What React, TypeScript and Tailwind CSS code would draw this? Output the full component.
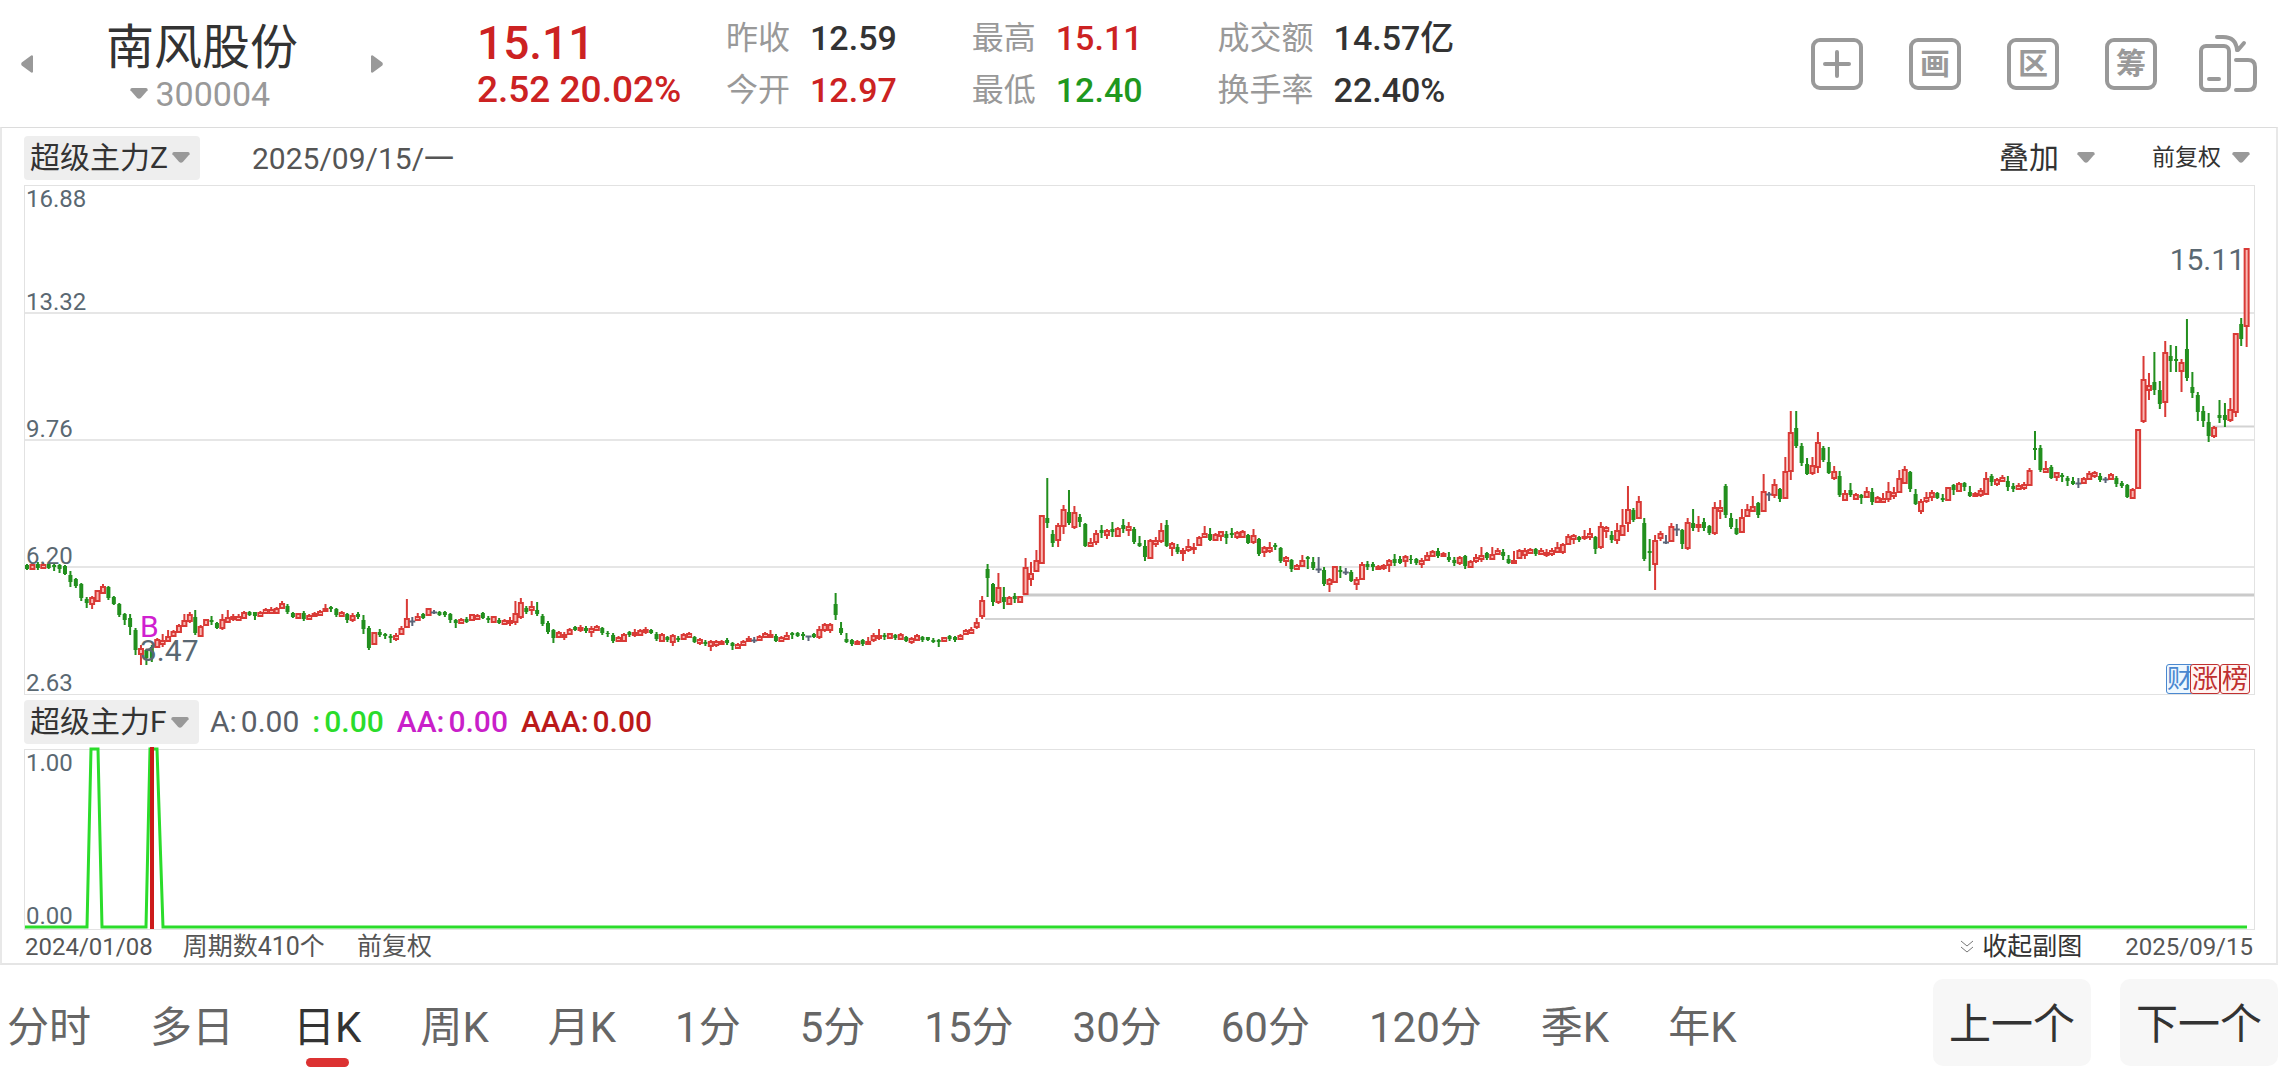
import { useState } from "react"
import clsx from "clsx"

// kind + high,bodyTop,bodyBottom,low in chart units (0 = top of the plot, 508 = bottom)
// r = up day, g = down day, k = flat day
const CANDLES = `
g378,379,383,384 r377,378,383,384 g376,378,382,384 r377,378,382,382 g377,378,382,383 g378,379,381,385 g378,379,383,387 g379,380,388,389
g385,389,396,401 g392,393,400,402 g397,398,412,415 g411,413,417,422 r410,411,418,423 r404,404,415,415 r398,400,407,407 g400,401,412,414
g410,411,418,419 g417,418,429,431 g427,428,434,439 g428,432,441,449 g442,444,464,469 r459,462,468,479 g463,464,472,479 g459,461,472,476
r452,453,461,462 r448,454,458,461 r444,450,455,456 r444,445,450,451 r438,439,446,447 r428,434,440,441 r426,428,435,437 g424,431,447,449
r439,440,450,451 r433,433,439,440 g430,434,436,439 g436,437,442,443 r428,433,442,444 r424,431,436,437 r428,430,433,435 r428,430,434,435
r425,426,432,433 g425,426,429,430 g426,426,430,434 r425,426,430,431 r422,423,427,428 r421,423,427,428 r421,422,427,428 r415,417,422,423
g418,420,426,428 g426,427,431,432 r427,427,432,433 g425,427,433,435 r428,429,433,433 r426,427,430,431 r424,425,429,430 r418,422,425,426
g420,421,423,426 g422,423,429,431 r425,426,430,431 g427,428,434,437 r427,429,434,436 g426,428,431,433 g429,434,443,448 g440,442,462,464
r446,446,458,459 g443,446,449,451 g447,448,450,453 g448,450,452,457 r447,449,453,455 r440,442,448,449 r413,432,441,442 k431,435,436,440
r427,430,434,435 g427,428,432,433 r422,422,429,429 k424,426,427,428 g425,426,429,430 g425,426,429,431 g427,428,434,437 g433,434,437,442
r432,433,437,438 g431,433,436,437 r428,428,434,434 r428,429,433,433 g426,427,432,433 g430,432,434,437 r430,430,436,437 g432,434,437,438
r433,434,438,438 r431,434,437,440 r415,427,436,439 r412,416,431,433 g420,422,426,428 r415,420,424,429 g416,424,428,430 g428,430,438,440
g435,437,446,448 g443,444,452,457 r445,446,451,452 r446,448,451,454 r442,443,448,448 g440,441,444,445 r439,441,444,446 g440,442,445,447
r440,442,446,451 r439,440,444,444 g441,442,447,449 g445,447,448,451 g447,449,455,457 r450,451,455,456 r447,448,455,456 g445,446,449,451
r443,446,449,451 r443,444,449,450 r441,443,446,448 g443,444,447,448 g446,448,453,455 r447,448,455,456 g450,451,454,456 r448,449,456,460
g450,452,454,456 r447,448,453,454 r446,447,451,452 g450,451,456,457 r452,453,457,459 g454,456,458,460 r454,455,460,465 r454,455,459,461
r454,455,458,459 g452,454,457,459 g456,457,460,464 r457,458,462,463 r454,455,459,459 r450,452,455,456 k451,454,455,457 r449,450,454,455
r446,447,451,452 r444,448,451,452 g448,450,455,456 r450,451,455,455 r446,449,453,454 g446,447,449,453 g446,447,450,451 g446,448,450,454
k450,450,451,455 g447,448,451,452 r440,443,451,453 r437,438,444,446 r437,438,444,447 g407,418,429,434 g436,442,447,449 g447,453,456,457
g453,454,458,460 r454,455,458,458 g453,454,458,460 r451,455,458,459 r447,449,454,456 r443,449,452,454 g447,449,451,454 r447,447,452,453
g448,449,452,454 r447,448,453,454 g450,451,455,456 r451,452,456,458 r448,449,454,455 g450,451,454,456 g451,451,454,455 g452,454,456,457
g453,454,456,461 r451,451,455,456 g449,450,453,455 g450,451,454,456 r448,449,453,454 r443,444,448,449 r441,443,447,448 r432,436,441,443
r410,414,430,433 g378,383,392,411 g397,398,416,420 r387,401,416,418 g401,411,416,423 r410,411,418,419 g407,410,413,417 r410,410,416,417
r372,381,408,408 r376,387,393,400 r364,374,385,386 r329,329,377,378 g292,332,337,342 g344,348,357,361 r337,339,354,361 r319,323,340,348
g304,326,337,339 r320,326,341,343 g328,331,336,341 g337,338,360,361 r352,356,360,360 r344,347,356,359 g339,344,347,352 r343,344,349,353
g336,343,346,351 r341,342,350,351 g333,339,343,347 r336,340,344,350 g341,343,356,358 g350,357,360,361 g354,360,371,375 r353,354,372,372
r351,354,358,361 r337,344,355,357 g334,339,360,361 r356,357,362,370 g358,361,366,368 r362,364,367,375 r353,360,364,366 r357,361,363,368
r350,351,359,360 r340,347,351,352 g342,348,354,355 r347,348,354,355 r345,345,350,355 g345,348,352,358 g342,347,349,352 r345,346,351,353
r344,345,351,352 g348,349,357,358 r343,349,356,358 g352,353,368,370 r360,361,366,371 r356,361,365,367 g357,359,361,364 g361,362,375,377
r370,371,375,380 g373,374,383,386 r378,379,383,383 r369,374,380,381 g370,371,373,383 g371,376,382,384 k371,383,384,387 g381,384,398,400
r392,393,398,406 r380,380,396,397 g380,384,386,392 k382,386,387,389 g384,386,395,396 r391,393,398,404 r376,378,393,394 g375,378,381,384
g376,378,381,385 r379,380,383,384 r378,379,382,384 r373,374,379,386 g368,373,377,380 g370,373,377,378 r369,370,375,381 g369,373,374,378
g372,373,377,379 r372,374,378,382 r366,369,374,375 r364,365,370,371 g362,365,370,372 r366,367,370,371 g366,371,374,376 g371,374,377,380
r370,371,377,379 g369,370,380,383 r374,375,381,382 r368,371,375,377 r361,369,373,376 g366,367,372,374 r361,368,373,374 r362,364,368,369
g363,366,370,374 g369,373,377,378 r365,374,377,378 r363,364,372,373 r362,364,369,373 r362,363,367,368 g362,363,368,370 r362,364,368,369
r363,366,369,371 r362,364,368,370 r356,361,366,367 r357,358,366,368 r348,350,358,359 r348,349,353,358 g350,351,354,356 r344,350,352,354
r342,347,351,354 g350,351,363,368 r336,340,361,363 r340,341,345,352 g345,349,354,357 r337,344,354,358 r323,339,349,350 r300,323,337,346
g322,324,334,336 r310,315,332,333 g332,337,373,375 g353,365,367,385 r349,354,378,404 r345,347,352,355 k349,356,357,358 r337,340,355,356
k338,343,344,350 g343,344,358,363 r332,336,362,364 g323,337,342,345 r330,338,341,346 g332,336,342,345 g339,340,347,349 r316,321,347,349
r314,321,325,333 g298,300,329,332 g327,332,341,343 g333,342,348,349 r323,331,346,347 r318,323,330,331 r310,320,325,325 g316,317,329,332
r288,305,325,326 k306,308,309,315 r293,298,309,312 g302,303,313,316 r271,285,312,313 r225,246,285,294 g225,242,260,262 g257,260,277,280
g272,278,288,289 r271,279,287,289 r246,256,281,287 g260,262,274,276 g261,276,287,288 r280,285,292,294 g285,290,309,311 r304,307,314,315
g297,304,309,311 r307,308,313,313 g308,309,312,318 r301,305,311,312 g302,306,316,319 r310,311,316,317 r307,312,316,317 r296,305,313,316
r301,306,310,313 r284,292,306,307 r280,283,297,298 g285,286,303,306 g303,308,318,319 r313,315,325,328 r306,311,315,317 r304,306,311,315
g306,307,312,313 g308,312,314,316 r301,301,314,315 g298,299,304,309 r296,297,305,306 g296,297,301,305 g300,306,310,311 r306,307,310,311
r302,304,309,311 r286,292,308,309 g288,290,296,300 r292,293,298,300 r289,291,295,296 g290,295,301,305 g297,300,303,306 r297,299,303,304
r296,298,302,304 r282,284,299,300 g245,262,264,274 g259,262,284,286 r275,282,286,287 g279,281,292,293 r286,286,291,295 g287,289,291,296
g290,292,295,300 g291,295,298,299 k292,297,298,302 r291,292,297,298 r285,287,293,294 r285,286,290,292 g287,290,294,296 k291,293,294,297
r287,288,293,294 g290,292,298,301 g295,297,300,302 g298,299,311,312 r302,303,312,313 r243,243,302,303 r170,193,235,237 r187,199,204,214
g166,196,204,209 g195,204,218,223 r155,166,216,231 g159,170,175,186 g160,173,175,186 r173,176,185,206 g133,163,192,195 g186,201,207,212
g206,209,226,235 g220,225,235,241 g227,236,250,256 r240,241,250,252 g214,229,232,237 g217,229,234,241 r212,223,234,236 r147,147,226,231
g132,138,153,160 r62,62,140,161
`
  .trim()
  .split(/\s+/)
  .map((s) => {
    const [high, top, bottom, low] = s.slice(1).split(",").map(Number)
    return { kind: s[0], high, top, bottom, low }
  })

const PRICE_MAX = 16.88
const PRICE_MIN = 2.63
const PRICES = [13.32, 9.76, 6.2, 2.63]

const STATS = [
  { label: "昨收", value: "12.59", color: "text-[#333]" },
  { label: "最高", value: "15.11", color: "text-[#cc2222]" },
  { label: "成交额", value: "14.57亿", color: "text-[#333]" },
  { label: "今开", value: "12.97", color: "text-[#cc2222]" },
  { label: "最低", value: "12.40", color: "text-[#1f981f]" },
  { label: "换手率", value: "22.40%", color: "text-[#333]" },
]

const LEGEND = [
  { name: "A:", value: "0.00", color: "text-[#5a6068]" },
  { name: ":", value: "0.00", color: "text-[#2bdc2b] font-medium" },
  { name: "AA:", value: "0.00", color: "text-[#c91fc9] font-medium" },
  { name: "AAA:", value: "0.00", color: "text-[#bb1a1a] font-medium" },
]

const PERIODS = ["分时", "多日", "日K", "周K", "月K", "1分", "5分", "15分", "30分", "60分", "120分", "季K", "年K"]

function Caret({ className }: { className?: string }) {
  return (
    <svg viewBox="0 0 18 11" className={clsx("h-[11px] w-[18px] shrink-0 fill-[#999]", className)} aria-hidden>
      <path d="M2 0h14q2 .3 1.6 2.2l-6.800 7.800q-1.800 1.600-3.600 0L.4 2.200Q0 .3 2 0z" />
    </svg>
  )
}

function Picker({ label, value, className, caret }: { label: string; value: string; className?: string; caret?: string }) {
  return (
    <label className={clsx("flex items-center", className)}>
      <select aria-label={label} className="appearance-none bg-transparent outline-none" defaultValue={value}>
        <option>{value}</option>
      </select>
      <Caret className={caret} />
    </label>
  )
}

function BoxIcon({ label, glyph }: { label: string; glyph?: string }) {
  return (
    <button
      aria-label={label}
      className="flex size-[52px] items-center justify-center rounded-[9px] border-4 border-[#999] text-[30px] leading-none font-bold text-[#999]"
    >
      {glyph ?? (
        <svg viewBox="0 0 30 30" className="size-[30px] stroke-[#999]" strokeWidth="4" strokeLinecap="round" fill="none">
          <path d="M15 3v24M3 15h24" />
        </svg>
      )}
    </button>
  )
}

function Header() {
  return (
    <header className="flex h-[127px] items-center pr-[20px] pl-[21px]">
      <button aria-label="上一只">
        <svg viewBox="0 0 12 18" className="h-[18px] w-[12px] fill-[#999]">
          <path d="M12 1v16q-1 1.500-2.500 0L.7 10.500q-1-1.500 0-3L9.500 1q1.500-1.500 2.500 0z" />
        </svg>
      </button>
      <div className="mx-[73px] flex flex-col items-center pt-[4px]">
        <h1 className="text-[48px] leading-[56px] whitespace-nowrap text-[#333]">南风股份</h1>
        <label className="mr-[4px] flex items-center gap-[8px] text-[34px] leading-[36px] text-[#999]">
          <Caret />
          <select aria-label="股票代码" className="appearance-none bg-transparent outline-none">
            <option>300004</option>
          </select>
        </label>
      </div>
      <button aria-label="下一只">
        <svg viewBox="0 0 12 18" className="h-[18px] w-[12px] fill-[#999]">
          <path d="M0 1v16q1 1.500 2.500 0l8.800-6.500q1-1.500 0-3L2.500 1Q1-.5 0 1z" />
        </svg>
      </button>
      <div className="ml-[94px] w-[249px] shrink-0 pt-[4px] font-medium whitespace-nowrap text-[#cc2222]">
        <p className="text-[46px] leading-[48px]">15.11</p>
        <p className="text-[37px] leading-[46px]">2.52 20.02%</p>
      </div>
      <dl className="grid shrink-0 grid-cols-[auto_auto_auto] gap-x-[75px] text-[34px] leading-[52px] whitespace-nowrap">
        {STATS.map((s) => (
          <div key={s.label} className="flex gap-[20px]">
            <dt className="text-[32px] text-[#999]">{s.label}</dt>
            <dd className={clsx("font-medium", s.color)}>{s.value}</dd>
          </div>
        ))}
      </dl>
      <div className="ml-auto flex shrink-0 items-center gap-[46px]">
        <BoxIcon label="添加" />
        <BoxIcon label="画线" glyph="画" />
        <BoxIcon label="区间" glyph="区" />
        <BoxIcon label="筹码" glyph="筹" />
      </div>
      <button aria-label="旋转屏幕" className="ml-[41px] shrink-0">
        <svg viewBox="0 0 60 62" className="h-[62px] w-[60px] stroke-[#999]" strokeWidth="4" strokeLinecap="round" strokeLinejoin="round" fill="none">
          <rect x="3" y="13" width="28" height="44" rx="5" />
          <path d="M11 46h10M19 4h6q13 0 14 13M37 10l3 7 6-7M38 27h12q7 0 7 7v16q0 7-7 7H38" />
        </svg>
      </button>
    </header>
  )
}

function PriceChart() {
  const step = 5.427
  return (
    <div className="relative h-[510px] border border-[#e2e2e2]">
      <svg viewBox="0 0 2229 508" preserveAspectRatio="none" className="block h-full w-full">
        <g stroke="#e6e6e6" strokeWidth="2">
          <path d="M0 127h2229M0 254h2229M0 381h2229" />
        </g>
        <path d="M998 409h1231" stroke="#cacaca" strokeWidth="3" />
        <path d="M960 433h1269M2187 240.500h42" stroke="#d3d3d3" strokeWidth="2" />
        {CANDLES.map((c, i) => {
          const x = 2 + i * step
          if (c.kind === "k") {
            return <path key={i} d={`M${x} ${c.high}V${c.low}M${x - 3} ${c.top + 0.5}h6`} stroke="#5a6478" strokeWidth="2" />
          }
          if (c.kind === "g") {
            return (
              <g key={i} fill="#228f1e">
                <rect x={x - 1} y={c.high} width="2" height={c.low - c.high} />
                <rect x={x - 2} y={c.top} width="4" height={c.bottom - c.top} />
              </g>
            )
          }
          return (
            <g key={i} stroke="#d93a36" fill="#f9b8b3">
              <path d={`M${x} ${c.high}V${c.top}M${x} ${c.bottom}V${c.low}`} strokeWidth="2" />
              <rect x={x - 2} y={c.top + 1} width="4" height={Math.max(c.bottom - c.top - 1, 1)} strokeWidth="2" />
            </g>
          )
        })}
      </svg>
      <div className="text-[24px] leading-[26px] text-[#5a6872]">
        <span className="absolute top-0 left-[1px]">{PRICE_MAX}</span>
        {PRICES.map((p) => (
          <span
            key={p}
            className="absolute left-[1px] mt-[2px] -translate-y-full"
            style={{ top: `${((PRICE_MAX - p) / (PRICE_MAX - PRICE_MIN)) * 100}%` }}
          >
            {p.toFixed(2)}
          </span>
        ))}
      </div>
      <div className="absolute top-[429px] left-[115px] flex flex-col text-[30px] leading-[24px] text-[#5a6872]">
        <span className="text-[#d020d0]">B</span>
        <span>3.47</span>
      </div>
      <span className="absolute top-[57px] right-[9px] text-[30px] leading-[34px] text-[#5a6872]">15.11</span>
      <div className="absolute right-[4px] bottom-0 flex text-[26px] leading-[28px]">
        <span className="-mr-[4px] rounded-[3px] border border-[#4a88d0] bg-[#eef8ff] text-[#4a88d0]">财</span>
        <span className="rounded-[3px] border border-[#c03030] bg-[#fff4f2] px-px text-[#c03030]">涨</span>
        <span className="rounded-[3px] border border-[#c03030] bg-[#fff4f2] px-px text-[#c03030]">榜</span>
      </div>
    </div>
  )
}

function SignalChart() {
  return (
    <div className="relative h-[181px] border border-[#e2e2e2] text-[24px] leading-[26px] text-[#5a6872]">
      <span className="absolute top-0 left-[1px]">1.00</span>
      <span className="absolute bottom-0 left-[1px]">0.00</span>
      <svg viewBox="0 0 2229 179" preserveAspectRatio="none" className="relative block h-full w-full overflow-visible" fill="none">
        <path d="M0 177H62L66-1H73L77 177H121L125-1H132L138 177H2222" stroke="#2bdc2b" strokeWidth="3" />
        <path d="M127-3V179" stroke="#cc1a1a" strokeWidth="4" />
      </svg>
    </div>
  )
}

export default function App() {
  const [period, setPeriod] = useState("日K")

  return (
    <main className="bg-white pr-[14px] font-['Roboto','Noto_Sans_CJK_SC',sans-serif]">
      <Header />

      <section className="border-x-2 border-t border-b-2 border-x-[#e8e8e8] border-t-[#dcdcdc] border-b-[#e5e5e5] pr-[21px] pl-[22px]">
        <div className="flex h-[57px] items-center pt-[2px] text-[30px] leading-[44px] text-[#333]">
          <Picker label="主图指标" value="超级主力Z" className="h-[44px] rounded-[4px] bg-[#eee] pr-[10px] pl-[6px]" caret="ml-[4px]" />
          <time className="ml-[52px] pt-[2px] text-[#555]">2025/09/15/一</time>
          <Picker label="叠加" value="叠加" className="ml-auto" caret="ml-[18px]" />
          <Picker label="复权" value="前复权" className="mr-[5px] ml-[57px] text-[23px]" caret="ml-[11px]" />
        </div>
        <PriceChart />
        <div className="flex h-[54px] items-center text-[30px] leading-[44px] text-[#333]">
          <Picker label="副图指标" value="超级主力F" className="h-[44px] rounded-[4px] bg-[#eee] pr-[10px] pl-[6px]" caret="ml-[4px]" />
          <div className="ml-[11px] flex gap-[13px]">
            {LEGEND.map((l) => (
              <span key={l.name} className={l.color}>
                {l.name}
                <span className="ml-[4px]">{l.value}</span>
              </span>
            ))}
          </div>
        </div>
        <SignalChart />
        <div className="flex h-[33px] items-center text-[24px] leading-[32px] text-[#555]">
          <time className="ml-[1px]">2024/01/08</time>
          <span className="ml-[30px] text-[25px]">周期数410个</span>
          <span className="ml-[32px] text-[25px]">前复权</span>
          <button className="ml-auto flex items-center gap-[9px] text-[25px] text-[#333]">
            <svg viewBox="0 0 12 14" className="h-[14px] w-[12px] stroke-[#777]" fill="none" aria-hidden>
              <path d="M0 1l6 5 6-5M0 7l6 5 6-5" />
            </svg>
            收起副图
          </button>
          <time className="mr-[2px] ml-[43px]">2025/09/15</time>
        </div>
      </section>

      <footer className="flex h-[115px] items-start justify-between pt-[14px] pl-[7px]">
        <nav className="flex gap-[59px] text-[42px] leading-[60px] whitespace-nowrap">
          {PERIODS.map((p) => (
            <button
              key={p}
              onClick={() => setPeriod(p)}
              className={clsx("flex flex-col items-center pt-[19px]", p === period ? "text-[#333]" : "text-[#666]")}
            >
              {p}
              {p === period && <span className="h-[9px] w-[43px] rounded-full bg-[#dc3232]" />}
            </button>
          ))}
        </nav>
        <div className="flex gap-[29px] text-[42px] whitespace-nowrap text-[#333]">
          <button className="h-[87px] w-[158px] rounded-[10px] bg-[#f7f7f7] pt-[4px]">上一个</button>
          <button className="h-[87px] w-[158px] rounded-[10px] bg-[#f7f7f7] pt-[4px]">下一个</button>
        </div>
      </footer>
    </main>
  )
}
